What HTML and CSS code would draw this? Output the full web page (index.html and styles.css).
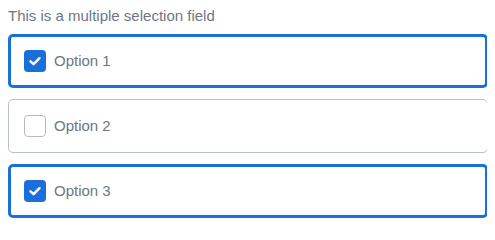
FILE: index.html
```html
<!DOCTYPE html>
<html>
<head>
<meta charset="utf-8">
<link rel="stylesheet" href="styles.css">
</head>
<body>
<div class="field">
  <div class="field-label">This is a multiple selection field</div>
  <div class="options">
    <label class="option is-checked">
      <span class="box"><svg viewBox="0 0 22 22" width="22" height="22"><path d="M6.5 11.3 L9.6 14.2 L15.5 8.2" fill="none" stroke="#fff" stroke-width="2.4" stroke-linecap="round" stroke-linejoin="round"/></svg></span>
      <span class="text">Option 1</span>
    </label>
    <label class="option">
      <span class="box"></span>
      <span class="text">Option 2</span>
    </label>
    <label class="option is-checked">
      <span class="box"><svg viewBox="0 0 22 22" width="22" height="22"><path d="M6.5 11.3 L9.6 14.2 L15.5 8.2" fill="none" stroke="#fff" stroke-width="2.4" stroke-linecap="round" stroke-linejoin="round"/></svg></span>
      <span class="text">Option 3</span>
    </label>
  </div>
</div>
</body>
</html>
```

FILE: styles.css
```css
html, body {
  background: #ffffff;
}
body {
  margin: 8px;
  font-family: "Liberation Sans", Arial, sans-serif;
  font-size: 15px;
  color: #6b7684;
}
.field {
  width: 480px;
}
.field-label {
  line-height: 16px;
  margin-bottom: 10px;
  color: #6d7886;
}
.options {
  display: flex;
  flex-direction: column;
  gap: 11px;
}
.option {
  box-sizing: border-box;
  height: 54px;
  display: flex;
  align-items: center;
  gap: 8px;
  padding: 0 15px;
  border: 1px solid #b9c0c7;
  border-radius: 5px;
}
.option.is-checked {
  border: 3px solid #1b6fdb;
  padding: 0 13px;
}
.box {
  box-sizing: border-box;
  width: 22px;
  height: 22px;
  border: 1px solid #b3bac2;
  border-radius: 4px;
  display: flex;
  background: #fff;
}
.is-checked .box {
  border: none;
  background: #1b6fdb;
}
.text {
  line-height: 18px;
  color: #6b7684;
}
```
